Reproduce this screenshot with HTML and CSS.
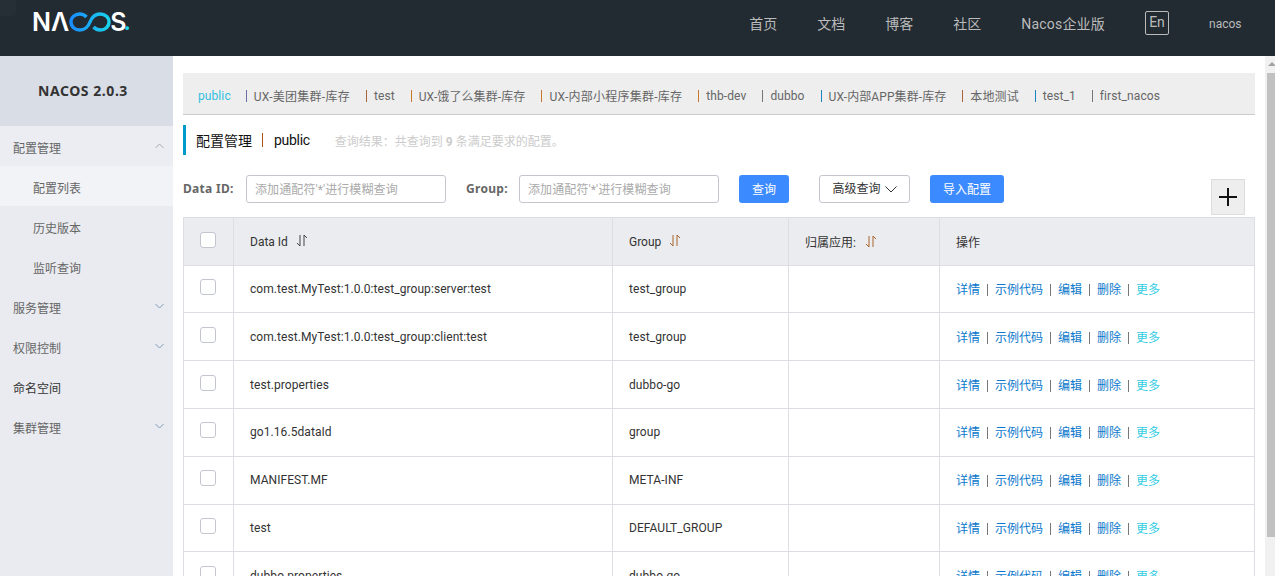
FILE: index.html
```html
<!DOCTYPE html>
<html lang="zh-CN">
<head>
    <meta charset="UTF-8">
    <meta name="viewport" content="width=device-width, initial-scale=1.0">
    <title>Nacos</title>
    <link rel="stylesheet" href="styles.css">
</head>
<body>
    <div class="page">
        <!-- Top bar -->
        <header class="topbar">
            <span class="corner-mark"></span>
            <div class="logo">
                <span class="logo-text">NΛ</span>
                <svg class="logo-loop" width="42" height="20" viewBox="0 0 42 20">
                    <defs>
                        <linearGradient id="loop-grad" x1="0" y1="0" x2="1" y2="0">
                            <stop offset="0" stop-color="#1a8cff"/>
                            <stop offset="1" stop-color="#19d3ea"/>
                        </linearGradient>
                    </defs>
                    <path d="M17.500 5C15.800 3.200 13.800 2 10.800 2 5.800 2 2 5.400 2 10s3.800 8 8.800 8c6.200 0 8.600-3.800 10.200-8 1.600-4.200 4-8 10.200-8 5 0 8.800 3.400 8.800 8s-3.800 8-8.800 8c-3 0-5-1.200-6.700-3" fill="none" stroke="url(#loop-grad)" stroke-width="3.400"/>
                </svg>
                <span class="logo-text logo-s">S</span><span class="logo-dot">.</span>
            </div>
            <nav class="topnav">
                <a>首页</a>
                <a>文档</a>
                <a>博客</a>
                <a>社区</a>
                <a class="nav-enterprise">Nacos企业版</a>
                <span class="lang-btn">En</span>
                <span class="username">nacos</span>
            </nav>
        </header>

        <div class="content">
            <!-- Left menu -->
            <aside class="sidebar">
                <div class="version">NACOS 2.0.3</div>
                <div class="menu-item menu-open">配置管理
                    <svg class="chevron chevron-up" width="9" height="6" viewBox="0 0 9 6"><path d="M.5 5 4.500 1l4 4" fill="none" stroke="currentColor"/></svg>
                </div>
                <div class="menu-sub menu-sub-active">配置列表</div>
                <div class="menu-sub">历史版本</div>
                <div class="menu-sub">监听查询</div>
                <div class="menu-item">服务管理
                    <svg class="chevron" width="9" height="6" viewBox="0 0 9 6"><path d="M.5 1l4 4 4-4" fill="none" stroke="currentColor"/></svg>
                </div>
                <div class="menu-item">权限控制
                    <svg class="chevron" width="9" height="6" viewBox="0 0 9 6"><path d="M.5 1l4 4 4-4" fill="none" stroke="currentColor"/></svg>
                </div>
                <div class="menu-item menu-plain">命名空间</div>
                <div class="menu-item">集群管理
                    <svg class="chevron" width="9" height="6" viewBox="0 0 9 6"><path d="M.5 1l4 4 4-4" fill="none" stroke="currentColor"/></svg>
                </div>
            </aside>

            <main class="main">
                <!-- Namespaces -->
                <div class="ns-bar">
                    <a class="ns-item ns-active">public</a>
                    <i class="ns-sep sep-violet"></i><a class="ns-item ns-wide">UX-美团集群-库存</a>
                    <i class="ns-sep sep-brown"></i><a class="ns-item">test</a>
                    <i class="ns-sep sep-orange"></i><a class="ns-item">UX-饿了么集群-库存</a>
                    <i class="ns-sep sep-orange"></i><a class="ns-item ns-wide">UX-内部小程序集群-库存</a>
                    <i class="ns-sep sep-orange"></i><a class="ns-item">thb-dev</a>
                    <i class="ns-sep sep-gray"></i><a class="ns-item">dubbo</a>
                    <i class="ns-sep sep-blue"></i><a class="ns-item">UX-内部APP集群-库存</a>
                    <i class="ns-sep sep-brown"></i><a class="ns-item">本地测试</a>
                    <i class="ns-sep sep-blue"></i><a class="ns-item">test_1</a>
                    <i class="ns-sep sep-gray"></i><a class="ns-item">first_nacos</a>
                </div>

                <div class="page-title">
                    <span class="title-main">配置管理</span>
                    <i class="title-sep"></i>
                    <span class="title-ns">public</span>
                    <span class="title-result">查询结果：共查询到 <b>9</b> 条满足要求的配置。</span>
                </div>

                <!-- Search row -->
                <div class="toolbar">
                    <label class="field-label label-id">Data ID:</label>
                    <input class="field-input" type="text" placeholder="添加通配符'*'进行模糊查询">
                    <label class="field-label label-group">Group:</label>
                    <input class="field-input" type="text" placeholder="添加通配符'*'进行模糊查询">
                    <button class="btn btn-primary btn-search">查询</button>
                    <button class="btn btn-normal">高级查询
                        <svg width="12" height="7" viewBox="0 0 12 7"><path d="M.5.500 6 6l5.500-5.500" fill="none" stroke="#333"/></svg>
                    </button>
                    <button class="btn btn-primary btn-import">导入配置</button>
                    <button class="btn-add">
                        <svg width="20" height="20" viewBox="0 0 20 20"><path d="M10 1v18M1 10h18" fill="none" stroke="#111" stroke-width="2"/></svg>
                    </button>
                </div>

                <table class="config-table">
                    <colgroup>
                        <col class="col-check">
                        <col class="col-id">
                        <col class="col-group">
                        <col class="col-app">
                        <col class="col-ops">
                    </colgroup>
                    <thead>
                        <tr>
                            <th><span class="checkbox"></span></th>
                            <th>Data Id <svg class="sort" width="12" height="13" viewBox="0 0 12 13"><path d="M4 1v11L1 9M8 12V1l3 3" fill="none" stroke="#444"/></svg></th>
                            <th>Group <svg class="sort" width="12" height="13" viewBox="0 0 12 13"><path d="M4 1v11L1 9M8 12V1l3 3" fill="none" stroke="#a8642c"/></svg></th>
                            <th>归属应用: <svg class="sort sort-app" width="12" height="13" viewBox="0 0 12 13"><path d="M4 1v11L1 9M8 12V1l3 3" fill="none" stroke="#a8642c"/></svg></th>
                            <th>操作</th>
                        </tr>
                    </thead>
                    <tbody id="config-rows"></tbody>
                </table>
            </main>

            <div class="scroll-rail">
                <span class="scroll-arrow"></span>
                <span class="scroll-thumb"></span>
            </div>
        </div>
    </div>

    <script>
        const rows = [
            ["com.test.MyTest:1.0.0:test_group:server:test", "test_group"],
            ["com.test.MyTest:1.0.0:test_group:client:test", "test_group"],
            ["test.properties", "dubbo-go"],
            ["go1.16.5dataId", "group"],
            ["MANIFEST.MF", "META-INF"],
            ["test", "DEFAULT_GROUP"],
            ["dubbo.properties", "dubbo-go"]
        ];

        const tableBody = document.getElementById('config-rows');
        rows.forEach(row => {
            const tr = document.createElement('tr');
            tr.innerHTML = `
                <td><span class="checkbox"></span></td>
                <td>${row[0]}</td>
                <td>${row[1]}</td>
                <td></td>
                <td class="ops">
                    <a>详情</a><i class="op-sep"></i><a>示例代码</a><i class="op-sep"></i><a>编辑</a><i class="op-sep"></i><a>删除</a><i class="op-sep"></i><a class="op-more">更多</a>
                </td>`;
            tableBody.appendChild(tr);
        });
    </script>
</body>
</html>
```

FILE: styles.css
```css
* {
    box-sizing: border-box;
}

body {
    margin: 0;
    font-family: Roboto, "Noto Sans CJK SC", sans-serif;
    font-size: 12px;
    color: #333;
    background-color: #fff;
}

.page {
    height: 576px;
    overflow: hidden;
    display: flex;
    flex-direction: column;
}

/* Top bar */
.topbar {
    position: relative;
    flex: none;
    height: 56px;
    display: flex;
    align-items: center;
    justify-content: space-between;
    background-color: #222a32;
}

.corner-mark {
    position: absolute;
    left: 0;
    top: 0;
    width: 16px;
    height: 16px;
    background-color: #262e36;
    border-bottom-right-radius: 3px;
}

.logo {
    display: flex;
    align-items: center;
    margin: -12px 0 0 32px;
    height: 18px;
}

.logo-text {
    font-family: Inter, sans-serif;
    font-size: 25px;
    font-weight: 600;
    line-height: 18px;
    color: #fff;
}

.logo-s {
    margin-left: -1px;
}

.logo-dot {
    margin-left: -3px;
    font-family: Inter, sans-serif;
    font-size: 22px;
    font-weight: 700;
    line-height: 18px;
    color: #19d3ea;
}

.topnav {
    display: flex;
    align-items: center;
    height: 46px;
    margin-bottom: 10px;
    font-size: 14px;
    color: #bbb;
}

.topnav a {
    margin-right: 40px;
}

.nav-enterprise {
    letter-spacing: .2px;
}

.lang-btn {
    width: 24px;
    height: 24px;
    border: 1px solid #bbb;
    border-radius: 2px;
    text-align: center;
    line-height: 20px;
    margin-right: 40px;
}

.username {
    width: 66px;
    font-size: 12px;
    margin-top: 2px;
}

/* Layout under the top bar */
.content {
    flex: 1;
    display: flex;
    min-height: 0;
}

/* Left menu */
.sidebar {
    flex: none;
    width: 173px;
    background-color: #e9ebf0;
    color: #666;
}

.version {
    height: 70px;
    padding-right: 7px;
    line-height: 70px;
    text-align: center;
    font-family: "Noto Sans", "Noto Sans CJK SC", sans-serif;
    font-size: 14px;
    font-weight: 700;
    letter-spacing: .55px;
    color: #333;
    background-color: #d9dde5;
}

.menu-item,
.menu-sub {
    position: relative;
    height: 40px;
    line-height: 46px;
}

.menu-item {
    padding-left: 13px;
}

.menu-sub {
    padding-left: 33px;
}

.menu-open {
    background-color: #ebedf2;
}

.menu-sub-active {
    background-color: #f2f3f7;
}

.menu-plain {
    color: #333;
}

.chevron {
    position: absolute;
    left: 155px;
    top: 17px;
    color: #7f9ab8;
}

.chevron-up {
    color: #a9a9a9;
}

/* Main area */
.main {
    flex: 1;
    min-width: 0;
    padding: 17px 10px 0;
}

.ns-bar {
    height: 42px;
    display: flex;
    align-items: center;
    padding: 4px 0 0 15px;
    background-color: #eee;
    border-bottom: 1px solid #ccc;
    color: #666;
    letter-spacing: .09px;
    white-space: nowrap;
}

.ns-item {
    margin-right: 16px;
}

.ns-wide {
    letter-spacing: .25px;
}

.ns-active {
    margin-right: 15px;
    color: #33c0e0;
}

.ns-sep {
    width: 1px;
    height: 12px;
    margin-right: 7px;
}

.sep-violet { background-color: #6b6fa8; }
.sep-brown { background-color: #a8643c; }
.sep-orange { background-color: #c87a2a; }
.sep-gray { background-color: #777; }
.sep-blue { background-color: #1a86c0; }

.page-title {
    height: 30px;
    margin-top: 10px;
    padding: 0 0 1px 10px;
    display: flex;
    align-items: center;
    border-left: 3px solid #09c;
    color: #111;
    font-size: 14px;
}

.title-sep {
    width: 1px;
    height: 14px;
    margin: 0 11px 0 10px;
    background-color: #a8541c;
}

.title-ns {
    letter-spacing: -.3px;
}

.title-result {
    margin-left: 25px;
    padding-top: 2px;
    font-size: 12px;
    color: #ccc;
}

/* Search row */
.toolbar {
    height: 42px;
    margin-top: 20px;
    display: flex;
    align-items: flex-start;
}

.field-label {
    line-height: 28px;
    font-family: "Noto Sans", "Noto Sans CJK SC", sans-serif;
    font-weight: 700;
    letter-spacing: .3px;
    color: #666;
}

.label-id {
    width: 63px;
}

.label-group {
    width: 53px;
    margin-left: 20px;
}

.field-input {
    width: 200px;
    height: 28px;
    padding: 1px 8px 0;
    border: 1px solid #c4c6cf;
    border-radius: 3px;
    font: inherit;
    letter-spacing: .1px;
    outline: none;
}

.field-input::placeholder {
    color: #aaa;
}

.btn {
    height: 28px;
    border-radius: 3px;
    font: inherit;
}

.btn-primary {
    padding: 0 0 2px;
    border: none;
    background-color: #3c8aff;
    color: #fff;
}

.btn-search {
    width: 50px;
    margin-left: 20px;
}

.btn-normal {
    width: 91px;
    margin-left: 30px;
    padding: 0 0 3px 1px;
    border: 1px solid #c4c6cf;
    background-color: #fff;
    color: #333;
}

.btn-normal svg {
    margin-left: 2px;
}

.btn-import {
    width: 74px;
    margin-left: 20px;
}

.btn-add {
    width: 34px;
    height: 36px;
    margin: 4px 10px 0 auto;
    padding: 0;
    display: flex;
    align-items: center;
    justify-content: center;
    background-color: #eee;
    border: 1px solid #ddd;
}

/* Config table */
.config-table {
    width: 1071px;
    table-layout: fixed;
    border-collapse: collapse;
}

.col-check { width: 50px; }
.col-id { width: 379px; }
.col-group { width: 176px; }
.col-app { width: 151px; }
.col-ops { width: 315px; }

th, td {
    padding: 0 16px;
    border: 1px solid #dcdee3;
    text-align: left;
    font-weight: 400;
}

th {
    height: 47.6px;
    background-color: #ebecf0;
}

td {
    height: 47.8px;
    letter-spacing: .07px;
}

.checkbox {
    display: block;
    width: 16px;
    height: 16px;
    margin: -3px 0 0 0;
    background-color: #fff;
    border: 1px solid #c4c6cf;
    border-radius: 3px;
}

td .checkbox {
    margin-top: -4px;
}

.sort {
    margin-left: 5px;
    vertical-align: -1px;
}

.sort-app {
    margin-left: 6px;
}

.ops {
    padding-bottom: 1px;
    letter-spacing: 0;
}

.ops a {
    color: #0a78cc;
}

.ops .op-more {
    color: #33cde5;
}

.op-sep {
    display: inline-block;
    width: 1px;
    height: 12px;
    margin: 0 7px;
    vertical-align: -2px;
    background-color: #777;
}

/* Scrollbar drawn beside the main area */
.scroll-rail {
    flex: none;
    position: relative;
    width: 10px;
    background-color: #f1f1f1;
}

.scroll-arrow {
    position: absolute;
    left: 3px;
    top: 6px;
    border-left: 4px solid transparent;
    border-right: 4px solid transparent;
    border-bottom: 4px solid #a3a3a3;
}

.scroll-thumb {
    position: absolute;
    left: 2px;
    right: 0;
    top: 17px;
    height: 464px;
    background-color: #c1c1c1;
}
```
